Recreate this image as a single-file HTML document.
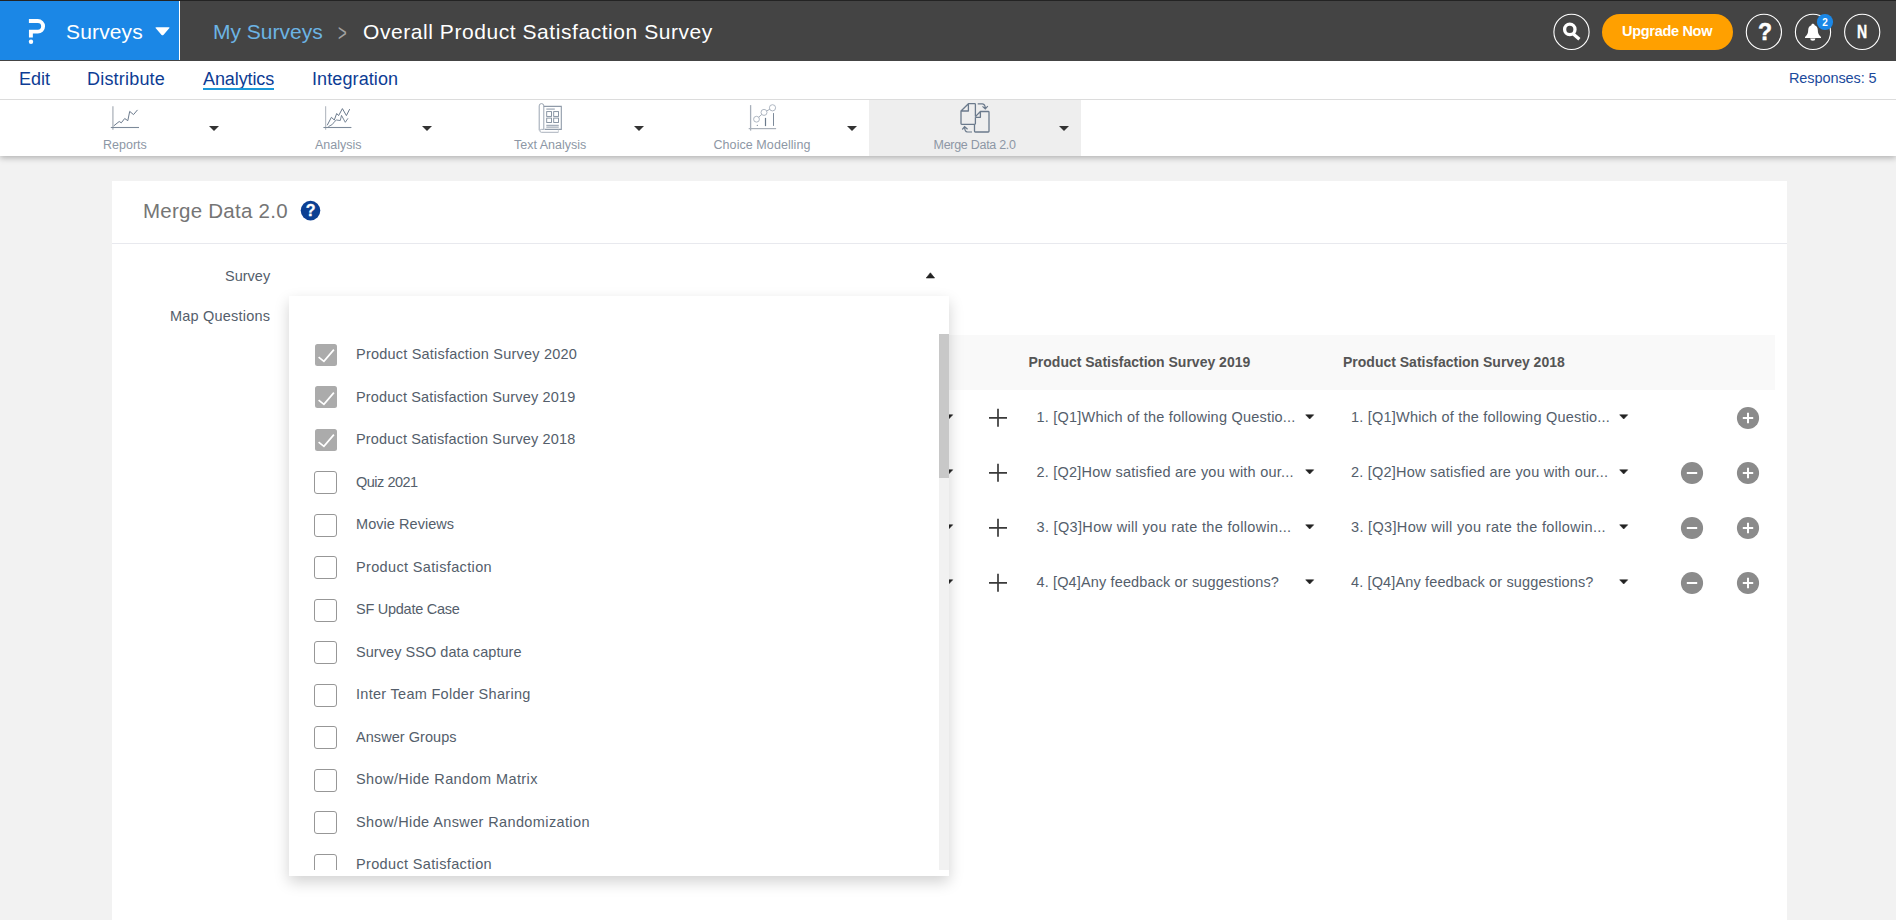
<!DOCTYPE html>
<html lang="en">
<head>
<meta charset="utf-8">
<title>Merge Data 2.0 - Overall Product Satisfaction Survey</title>
<style>
*{box-sizing:border-box;margin:0;padding:0}
html,body{width:1896px;height:920px;overflow:hidden;background:#f2f2f2;font-family:"Liberation Sans",sans-serif;color:#545e6b}
.abs{position:absolute}
.t{position:absolute;white-space:nowrap;line-height:1}
#topline{left:0;top:0;width:1896px;height:1px;background:#232323}
#header{left:0;top:1px;width:1896px;height:60px;background:#444444}
#brand{left:0;top:1px;width:179px;height:59px;background:#1b87e6}
#brandline{left:179px;top:1px;width:1px;height:59px;background:#fff}
#nav{left:0;top:61px;width:1896px;height:39px;background:#fff;border-bottom:1px solid #dcdcdc}
#toolbar{left:0;top:100px;width:1896px;height:56px;background:#fff;box-shadow:0 2px 6px rgba(0,0,0,.27);clip-path:inset(0 0 -12px 0)}
#tb-active{left:869px;top:100px;width:212px;height:56px;background:#eeeeee}
.navt{font-size:18px;color:#0d3c94;top:70px}
.tbl{font-size:12.5px;color:#8d97a5;top:139px}
.caret{position:absolute;width:0;height:0;border-left:5px solid transparent;border-right:5px solid transparent;border-top:5px solid #333}
#card{left:112px;top:181px;width:1675px;height:760px;background:#fff}
#cardline{left:112px;top:243px;width:1675px;height:1px;background:#e8e9ee}
.lbl{font-size:14.5px;color:#545e6b}
#thead{left:949px;top:335px;width:826px;height:55px;background:#f9f9f9}
.th{font-size:14px;font-weight:bold;color:#555;top:355px}
.q{font-size:14.5px;color:#545e6b}
.sc{position:absolute;width:10px;height:5px}
#dd{left:289px;top:296px;width:660px;height:580px;background:#fff;box-shadow:0 6px 14px rgba(0,0,0,.18);overflow:hidden}
#track{left:650px;top:38px;width:10px;height:536px;background:#f1f1f1}
#thumb{left:650px;top:38px;width:10px;height:144px;background:#c8c8c8}
.cb{position:absolute;left:25px;width:23px;height:23px;margin-top:.4px;border:1px solid #979797;border-radius:3px;background:#fff}
.cb.on{left:25.5px;width:22.6px;height:22.2px;margin-top:.4px;background:#ababab;border:0;border-radius:2.5px}
.it{font-size:14.5px;color:#545e6b;left:67px}
.circ{position:absolute;width:37px;height:37px;border:1px solid #fff;border-radius:50%;top:13px}
</style>
</head>
<body>
<div class="abs" id="header"></div>
<div class="abs" id="topline"></div>
<div class="abs" id="brand"></div>
<div class="abs" id="brandline"></div>

<div class="abs" id="nav"></div>
<div class="abs" id="toolbar"></div>
<div class="abs" id="tb-active"></div>


<!-- header texts -->
<div class="t" id="t-surveys" style="left:66px;top:21px;font-size:21px;color:#fff;letter-spacing:.15px">Surveys</div>
<div class="t" id="t-mysurveys" style="left:213px;top:21px;font-size:21px;color:#6cb4e4">My Surveys</div>
<div class="t" id="t-gt" style="left:338px;top:19.9px;font-size:21px;color:#a2a2a2;transform-origin:0 0;transform:scale(.71,1.18)">&gt;</div>
<div class="t" id="t-title" style="left:363px;top:21px;font-size:21px;color:#fff;letter-spacing:.56px">Overall Product Satisfaction Survey</div>
<div class="abs" id="upgrade" style="left:1602px;top:14px;width:131px;height:36px;border-radius:18px;background:#ffa000"></div>
<div class="t" id="t-upgrade" style="left:1622px;top:24px;font-size:14.5px;font-weight:bold;color:#fff;letter-spacing:-.3px">Upgrade Now</div>
<div class="t" id="t-q" style="left:1758px;top:21px;font-size:23px;font-weight:bold;color:#fff;-webkit-text-stroke:.5px #fff">?</div>
<div class="t" id="t-n" style="left:1857px;top:23px;font-size:18px;font-weight:bold;color:#fff;transform-origin:0 0;transform:scaleX(.78);-webkit-text-stroke:.4px #fff">N</div>

<!-- nav -->
<div class="t navt" id="t-edit" style="left:19px">Edit</div>
<div class="t navt" id="t-dist" style="left:87px;letter-spacing:.2px">Distribute</div>
<div class="t navt" id="t-ana" style="left:203px;letter-spacing:-.1px">Analytics</div>
<div class="abs" id="ana-ul" style="left:203px;top:88px;width:71px;height:2px;background:#1a98d9"></div>
<div class="t navt" id="t-integ" style="left:312px;letter-spacing:.1px">Integration</div>
<div class="t" id="t-resp" style="left:1789px;top:71px;font-size:14.5px;color:#1b4a9c;letter-spacing:-.1px">Responses: 5</div>

<!-- toolbar labels -->
<div class="t tbl" id="t-reports" style="left:103px">Reports</div>
<div class="t tbl" id="t-analysis" style="left:315px">Analysis</div>
<div class="t tbl" id="t-textan" style="left:514px">Text Analysis</div>
<div class="t tbl" id="t-choice" style="left:713.5px;letter-spacing:.07px">Choice Modelling</div>
<div class="t tbl" id="t-merge" style="left:933.5px;letter-spacing:-.28px">Merge Data 2.0</div>
<div class="caret" style="left:209px;top:125.6px"></div>
<div class="caret" style="left:421.5px;top:125.6px"></div>
<div class="caret" style="left:634px;top:125.6px"></div>
<div class="caret" style="left:846.5px;top:125.6px"></div>
<div class="caret" style="left:1059px;top:125.6px"></div>

<svg class="abs" id="topsvg" style="left:0;top:0" width="1896" height="160" viewBox="0 0 1896 160" fill="none">
  <!-- logo -->
  <path d="M28.9 21H37.8A5.3 5.3 0 0 1 37.8 31.6H30.9V37.6" stroke="#fff" stroke-width="3.9" stroke-linejoin="miter"/>
  <circle cx="31" cy="41.7" r="2.2" fill="#fff"/>
  <path d="M156.5 27.2H168.5Q170.3 27.2 169 28.6L163.4 34.9Q162.5 35.8 161.6 34.9L156 28.6Q154.7 27.2 156.5 27.2Z" fill="#fff"/>
  <!-- header circles -->
  <circle cx="1571.5" cy="31.9" r="17.6" stroke="#fff" stroke-width="1.1"/>
  <circle cx="1763.9" cy="31.9" r="17.6" stroke="#fff" stroke-width="1.1"/>
  <circle cx="1813" cy="31.9" r="17.6" stroke="#fff" stroke-width="1.1"/>
  <circle cx="1862.2" cy="31.9" r="17.6" stroke="#fff" stroke-width="1.1"/>
  <!-- magnifier -->
  <circle cx="1569.8" cy="29.4" r="5.2" stroke="#fff" stroke-width="3.3"/>
  <path d="M1573.6 34.2L1579.4 39.2" stroke="#fff" stroke-width="3.2" stroke-linecap="butt"/>
  <!-- bell -->
  <path d="M1812.8 23.8C1811.9 23.8 1811.4 24.4 1811.4 25.2C1809.3 25.9 1808.2 27.8 1808.2 30C1808.2 33.5 1807.2 35 1805 37L1805 37.9L1821 37.9L1821 37C1818.8 35 1817.8 33.5 1817.8 30C1817.8 27.8 1816.7 25.9 1814.6 25.2C1814.6 24.4 1813.7 23.8 1812.8 23.8Z" fill="#fff"/>
  <path d="M1810.2 38.6a2.6 2.2 0 0 0 5.2 0Z" fill="#fff"/>
  <circle cx="1825" cy="22" r="8.1" fill="#1b87e6"/>
  <text x="1825" y="25.7" font-family="Liberation Sans, sans-serif" font-size="10" font-weight="bold" fill="#fff" text-anchor="middle">2</text>

  <!-- Reports icon -->
  <path d="M112.9 106.3V129.7" stroke="#b9bec5" stroke-width="1.5"/>
  <path d="M110.8 127.5H139" stroke="#7d8a9a" stroke-width="1.1"/>
  <path d="M113.7 125.9L119.2 121.5L121.3 122.8L124.7 118.5L127.8 120.7L129.7 111.4L133.5 114.6L137.5 109.9" stroke="#6b7a8c" stroke-width="1"/>
  <!-- Analysis icon -->
  <path d="M325.6 106.3V129.7" stroke="#b9bec5" stroke-width="1.2"/>
  <path d="M323.4 127.5H351.4" stroke="#7d8a9a" stroke-width="1.1"/>
  <path d="M327.2 125.3L331.4 117.3L334.3 120L336.7 113.5L338.6 115.6L342.4 108.6L346.4 115.6L349.7 109.1" stroke="#6b7a8c" stroke-width="1"/>
  <path d="M328.4 126.6Q333 125 334.8 121.3L336.4 120L340.3 120.5L341.5 115.4L345.3 122.3L348 118.3" stroke="#6b7a8c" stroke-width="0.9"/>
  <!-- Text analysis icon -->
  <path d="M539.2 130.3V105.9A2.3 2.3 0 0 1 543.8 105.9V129.5" stroke="#8f9aa8" stroke-width="0.9"/>
  <path d="M543.8 106.4H561.3V129.4H544.6" stroke="#8f9aa8" stroke-width="1.1"/>
  <path d="M543.8 129.4H541.4A2.2 1.5 0 0 0 541.4 132.3H558.4" stroke="#a0a9b5" stroke-width="0.9"/>
  <path d="M558.4 132.3V129.6" stroke="#c0c6ce" stroke-width="0.8"/>
  <path d="M546.3 109.1H554.8" stroke="#a5aeba" stroke-width="1.3"/>
  <rect x="546.7" y="111.6" width="4.8" height="4.8" stroke="#7d8a9a" stroke-width="0.9"/>
  <rect x="553.7" y="111.6" width="4.8" height="4.8" stroke="#7d8a9a" stroke-width="0.9"/>
  <rect x="546.7" y="118.1" width="4.8" height="4.4" stroke="#7d8a9a" stroke-width="0.9"/>
  <rect x="553.7" y="118.1" width="4.8" height="4.4" stroke="#7d8a9a" stroke-width="0.9"/>
  <path d="M546.3 125.4H558.8M546.3 127.1H558.8" stroke="#a5aeba" stroke-width="1.1"/>
  <!-- Choice modelling icon -->
  <path d="M750.6 105.1V130.6" stroke="#a7afba" stroke-width="1.3"/>
  <path d="M748.7 128.6H776.1" stroke="#aab1ba" stroke-width="1.2"/>
  <circle cx="756.5" cy="119.2" r="2.9" stroke="#a6afbb" stroke-width="0.9"/>
  <circle cx="764" cy="112.4" r="3" stroke="#a6afbb" stroke-width="0.9"/>
  <circle cx="772.5" cy="107.8" r="3.1" stroke="#a6afbb" stroke-width="0.9"/>
  <path d="M758.7 117.2L761.8 114.4M766.7 110.9L769.8 109.3" stroke="#a6afbb" stroke-width="1"/>
  <path d="M765.5 117.9V126.1" stroke="#6b7a8c" stroke-width="1.2"/>
  <path d="M773.5 113.1V125.9" stroke="#7d8a9a" stroke-width="1"/>
  <circle cx="757.3" cy="125.3" r="0.6" fill="#6b7a8c"/>
  <!-- Merge data icon -->
  <path d="M968.4 103.7H974.6Q975.4 103.7 975.4 104.5V116.4M975.4 117.3V123.6Q975.4 124.4 974.6 124.4H961.8Q961 124.4 961 123.6V111L968.4 103.7V111H961" stroke="#6b7a8c" stroke-width="1.3" stroke-linejoin="round"/>
  <path d="M975.4 116.6L980.4 111.5H988.2Q989 111.5 989 112.3V131.2Q989 132 988.2 132H975.3Q974.5 132 974.5 131.2V124.4M980.4 111.5V117.3H975.4" stroke="#6b7a8c" stroke-width="1.3" stroke-linejoin="round"/>
  <path d="M977.7 103.8H982.5Q985.3 104.2 985.3 108.6M982.5 106.4L985.3 108.9L987.8 106.2" stroke="#6b7a8c" stroke-width="1.2"/>
  <path d="M972 132H967.4Q964.6 131.6 964.6 126.9M962.3 129.5L964.6 126.7L967.6 129.3" stroke="#6b7a8c" stroke-width="1.2"/>
</svg>

<div class="abs" id="card"></div>
<div class="abs" id="cardline"></div>
<div class="abs" id="thead"></div>

<!-- card content -->
<div class="t" id="t-h1" style="left:143px;top:201px;font-size:20.5px;color:#757575;letter-spacing:.25px">Merge Data 2.0</div>
<svg class="abs" style="left:300px;top:200px" width="22" height="22" viewBox="0 0 22 22"><circle cx="10.5" cy="10.6" r="9.8" fill="#0b3f93"/></svg>
<div class="t" id="t-hq" style="left:305.7px;top:203.3px;font-size:16px;font-weight:bold;color:#fff;-webkit-text-stroke:.3px #fff">?</div>
<div class="t lbl" id="t-survey" style="left:225px;top:268.5px">Survey</div>
<div class="t lbl" id="t-mapq" style="left:170px;top:309.3px;letter-spacing:.2px">Map Questions</div>
<svg class="abs" style="left:925px;top:271px" width="11" height="8" viewBox="0 0 11 8"><path d="M1.2 7H9.6L5.4 1.8Z" fill="#222" stroke="#222" stroke-width=".6" stroke-linejoin="round"/></svg>
<div class="t th" id="t-th1" style="left:1028.5px">Product Satisfaction Survey 2019</div>
<div class="t th" id="t-th2" style="left:1343px">Product Satisfaction Survey 2018</div>

<div class="t q" id="q0a" style="left:1036.5px;top:410.3px;letter-spacing:0.21px">1. [Q1]Which of the following Questio...</div>
<div class="t q" id="q0b" style="left:1351px;top:410.3px;letter-spacing:0.21px">1. [Q1]Which of the following Questio...</div>
<svg class="abs" style="left:1304.5px;top:413.8px" width="10" height="6" viewBox="0 0 10 6"><path d="M0.7 0.8H8.7L4.7 5Z" fill="#222" stroke="#222" stroke-width=".6" stroke-linejoin="round"/></svg>
<svg class="abs" style="left:1619px;top:413.8px" width="10" height="6" viewBox="0 0 10 6"><path d="M0.7 0.8H8.7L4.7 5Z" fill="#222" stroke="#222" stroke-width=".6" stroke-linejoin="round"/></svg>
<svg class="abs" style="left:944px;top:413.8px" width="10" height="6" viewBox="0 0 10 6"><path d="M0.7 0.8H8.7L4.7 5Z" fill="#222" stroke="#222" stroke-width=".6" stroke-linejoin="round"/></svg>
<svg class="abs" style="left:988px;top:407.8px" width="20" height="20" viewBox="0 0 20 20"><path d="M10 0.8V18.8M1 9.8H19" stroke="#3a3a3a" stroke-width="1.7"/></svg>
<svg class="abs" style="left:1736px;top:405.8px" width="24" height="24" viewBox="0 0 24 24"><circle cx="12" cy="12" r="11.1" fill="#8b8b8b"/><path d="M12 6.8V17.2M6.8 12H17.2" stroke="#fff" stroke-width="2"/></svg>
<div class="t q" id="q1a" style="left:1036.5px;top:465.2px;letter-spacing:0.225px">2. [Q2]How satisfied are you with our...</div>
<div class="t q" id="q1b" style="left:1351px;top:465.2px;letter-spacing:0.225px">2. [Q2]How satisfied are you with our...</div>
<svg class="abs" style="left:1304.5px;top:468.7px" width="10" height="6" viewBox="0 0 10 6"><path d="M0.7 0.8H8.7L4.7 5Z" fill="#222" stroke="#222" stroke-width=".6" stroke-linejoin="round"/></svg>
<svg class="abs" style="left:1619px;top:468.7px" width="10" height="6" viewBox="0 0 10 6"><path d="M0.7 0.8H8.7L4.7 5Z" fill="#222" stroke="#222" stroke-width=".6" stroke-linejoin="round"/></svg>
<svg class="abs" style="left:944px;top:468.7px" width="10" height="6" viewBox="0 0 10 6"><path d="M0.7 0.8H8.7L4.7 5Z" fill="#222" stroke="#222" stroke-width=".6" stroke-linejoin="round"/></svg>
<svg class="abs" style="left:988px;top:462.7px" width="20" height="20" viewBox="0 0 20 20"><path d="M10 0.8V18.8M1 9.8H19" stroke="#3a3a3a" stroke-width="1.7"/></svg>
<svg class="abs" style="left:1736px;top:460.7px" width="24" height="24" viewBox="0 0 24 24"><circle cx="12" cy="12" r="11.1" fill="#8b8b8b"/><path d="M12 6.8V17.2M6.8 12H17.2" stroke="#fff" stroke-width="2"/></svg>
<svg class="abs" style="left:1680px;top:460.7px" width="24" height="24" viewBox="0 0 24 24"><circle cx="12" cy="12" r="11.1" fill="#8b8b8b"/><path d="M6.8 12H17.2" stroke="#fff" stroke-width="2"/></svg>
<div class="t q" id="q2a" style="left:1036.5px;top:520.2px;letter-spacing:0.33px">3. [Q3]How will you rate the followin...</div>
<div class="t q" id="q2b" style="left:1351px;top:520.2px;letter-spacing:0.33px">3. [Q3]How will you rate the followin...</div>
<svg class="abs" style="left:1304.5px;top:523.7px" width="10" height="6" viewBox="0 0 10 6"><path d="M0.7 0.8H8.7L4.7 5Z" fill="#222" stroke="#222" stroke-width=".6" stroke-linejoin="round"/></svg>
<svg class="abs" style="left:1619px;top:523.7px" width="10" height="6" viewBox="0 0 10 6"><path d="M0.7 0.8H8.7L4.7 5Z" fill="#222" stroke="#222" stroke-width=".6" stroke-linejoin="round"/></svg>
<svg class="abs" style="left:944px;top:523.7px" width="10" height="6" viewBox="0 0 10 6"><path d="M0.7 0.8H8.7L4.7 5Z" fill="#222" stroke="#222" stroke-width=".6" stroke-linejoin="round"/></svg>
<svg class="abs" style="left:988px;top:517.7px" width="20" height="20" viewBox="0 0 20 20"><path d="M10 0.8V18.8M1 9.8H19" stroke="#3a3a3a" stroke-width="1.7"/></svg>
<svg class="abs" style="left:1736px;top:515.7px" width="24" height="24" viewBox="0 0 24 24"><circle cx="12" cy="12" r="11.1" fill="#8b8b8b"/><path d="M12 6.8V17.2M6.8 12H17.2" stroke="#fff" stroke-width="2"/></svg>
<svg class="abs" style="left:1680px;top:515.7px" width="24" height="24" viewBox="0 0 24 24"><circle cx="12" cy="12" r="11.1" fill="#8b8b8b"/><path d="M6.8 12H17.2" stroke="#fff" stroke-width="2"/></svg>
<div class="t q" id="q3a" style="left:1036.5px;top:575.3px;letter-spacing:0.135px">4. [Q4]Any feedback or suggestions?</div>
<div class="t q" id="q3b" style="left:1351px;top:575.3px;letter-spacing:0.135px">4. [Q4]Any feedback or suggestions?</div>
<svg class="abs" style="left:1304.5px;top:578.8px" width="10" height="6" viewBox="0 0 10 6"><path d="M0.7 0.8H8.7L4.7 5Z" fill="#222" stroke="#222" stroke-width=".6" stroke-linejoin="round"/></svg>
<svg class="abs" style="left:1619px;top:578.8px" width="10" height="6" viewBox="0 0 10 6"><path d="M0.7 0.8H8.7L4.7 5Z" fill="#222" stroke="#222" stroke-width=".6" stroke-linejoin="round"/></svg>
<svg class="abs" style="left:944px;top:578.8px" width="10" height="6" viewBox="0 0 10 6"><path d="M0.7 0.8H8.7L4.7 5Z" fill="#222" stroke="#222" stroke-width=".6" stroke-linejoin="round"/></svg>
<svg class="abs" style="left:988px;top:572.8px" width="20" height="20" viewBox="0 0 20 20"><path d="M10 0.8V18.8M1 9.8H19" stroke="#3a3a3a" stroke-width="1.7"/></svg>
<svg class="abs" style="left:1736px;top:570.8px" width="24" height="24" viewBox="0 0 24 24"><circle cx="12" cy="12" r="11.1" fill="#8b8b8b"/><path d="M12 6.8V17.2M6.8 12H17.2" stroke="#fff" stroke-width="2"/></svg>
<svg class="abs" style="left:1680px;top:570.8px" width="24" height="24" viewBox="0 0 24 24"><circle cx="12" cy="12" r="11.1" fill="#8b8b8b"/><path d="M6.8 12H17.2" stroke="#fff" stroke-width="2"/></svg>

<div class="abs" id="dd">
  <div class="abs" id="list" style="left:0;top:38px;width:650px;height:536px;overflow:hidden">
    <div class="cb on" style="top:9.3px"></div>
    <svg class="abs" style="left:25px;top:9.3px" width="23" height="23" viewBox="0 0 23 23" fill="none"><path d="M4.6 14.1L9.9 18.3L19.9 6.6" stroke="#fff" stroke-width="1.7"/></svg>
    <div class="t it" id="it0" style="top:12.7px;letter-spacing:0.206px">Product Satisfaction Survey 2020</div>
    <div class="cb on" style="top:51.8px"></div>
    <svg class="abs" style="left:25px;top:51.8px" width="23" height="23" viewBox="0 0 23 23" fill="none"><path d="M4.6 14.1L9.9 18.3L19.9 6.6" stroke="#fff" stroke-width="1.7"/></svg>
    <div class="t it" id="it1" style="top:56.2px;letter-spacing:0.156px">Product Satisfaction Survey 2019</div>
    <div class="cb on" style="top:94.3px"></div>
    <svg class="abs" style="left:25px;top:94.3px" width="23" height="23" viewBox="0 0 23 23" fill="none"><path d="M4.6 14.1L9.9 18.3L19.9 6.6" stroke="#fff" stroke-width="1.7"/></svg>
    <div class="t it" id="it2" style="top:97.7px;letter-spacing:0.16px">Product Satisfaction Survey 2018</div>
    <div class="cb" style="top:136.8px"></div>
    <div class="t it" id="it3" style="top:141.2px;letter-spacing:-0.49px">Quiz 2021</div>
    <div class="cb" style="top:179.3px"></div>
    <div class="t it" id="it4" style="top:182.7px;letter-spacing:0.05px">Movie Reviews</div>
    <div class="cb" style="top:221.8px"></div>
    <div class="t it" id="it5" style="top:226.2px;letter-spacing:0.35px">Product Satisfaction</div>
    <div class="cb" style="top:264.3px"></div>
    <div class="t it" id="it6" style="top:267.7px;letter-spacing:-0.26px">SF Update Case</div>
    <div class="cb" style="top:306.8px"></div>
    <div class="t it" id="it7" style="top:311.2px;letter-spacing:0.05px">Survey SSO data capture</div>
    <div class="cb" style="top:349.3px"></div>
    <div class="t it" id="it8" style="top:352.7px;letter-spacing:0.29px">Inter Team Folder Sharing</div>
    <div class="cb" style="top:391.8px"></div>
    <div class="t it" id="it9" style="top:396.2px;letter-spacing:0.05px">Answer Groups</div>
    <div class="cb" style="top:434.3px"></div>
    <div class="t it" id="it10" style="top:437.7px;letter-spacing:0.41px">Show/Hide Random Matrix</div>
    <div class="cb" style="top:476.8px"></div>
    <div class="t it" id="it11" style="top:481.2px;letter-spacing:0.38px">Show/Hide Answer Randomization</div>
    <div class="cb" style="top:519.3px"></div>
    <div class="t it" id="it12" style="top:522.7px;letter-spacing:0.35px">Product Satisfaction</div>
  </div>
  <div class="abs" id="track"></div>
  <div class="abs" id="thumb"></div>
</div>
</body>
</html>
